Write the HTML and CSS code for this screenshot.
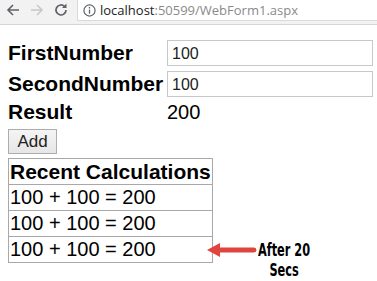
FILE: index.html
```html
<!DOCTYPE html>
<html lang="en">
<head>
    <meta charset="UTF-8">
    <title>WebForm1</title>
    <link rel="stylesheet" href="styles.css">
</head>
<body>
    <div class="toolbar">
        <div class="nav">
            <svg class="nav-icon" width="16" height="16" viewBox="0 0 16 16"><path d="M14 8H3M8 3L3 8l5 5" fill="none" stroke="#5f6368" stroke-width="1.6"/></svg>
            <svg class="nav-icon" width="16" height="16" viewBox="0 0 16 16"><path d="M2 8h11M8 3l5 5-5 5" fill="none" stroke="#c8c8c8" stroke-width="1.6"/></svg>
            <svg class="nav-icon" width="16" height="16" viewBox="0 0 16 16"><path d="M13 8a5 5 0 1 1-1.5-3.6" fill="none" stroke="#5f6368" stroke-width="1.7"/><path d="M13.5 1.5v4.5H9z" fill="#5f6368"/></svg>
        </div>
        <div class="address">
            <svg width="13" height="13" viewBox="0 0 14 14"><circle cx="7" cy="7" r="6" fill="none" stroke="#5f6368" stroke-width="1.3"/><path d="M7 6v4.5" stroke="#5f6368" stroke-width="1.4"/><circle cx="7" cy="4" r="0.9" fill="#5f6368"/></svg>
            <span class="host">localhost</span><span class="path">:50599/WebForm1.aspx</span>
        </div>
    </div>

    <div class="page">
        <div class="form">
            <label class="label">FirstNumber</label>
            <input class="field" type="text" value="100">
            <label class="label">SecondNumber</label>
            <input class="field" type="text" value="100">
            <span class="label">Result</span>
            <span class="result">200</span>
        </div>
        <button class="add-btn">Add</button>

        <table class="recent">
            <tr><th>Recent Calculations</th></tr>
            <tr><td>100 + 100 = 200</td></tr>
            <tr><td>100 + 100 = 200</td></tr>
            <tr><td>100 + 100 = 200</td></tr>
        </table>
    </div>

    <div class="note">
        <svg width="50" height="14" viewBox="0 0 50 14"><path d="M0 7L13 0v4.5h34a2.5 2.5 0 0 1 0 5H13V14z" fill="#e0443e"/></svg>
        <span class="note-text">After 20<br>Secs</span>
    </div>
</body>
</html>
```

FILE: styles.css
```css
* {
    box-sizing: border-box;
}

body {
    margin: 0;
    font-family: 'Liberation Sans', Arial, sans-serif;
    background: white;
    color: black;
}

.toolbar {
    height: 25px;
    background: #f2f2f2;
    border-bottom: 1px solid #d6d6d6;
    display: flex;
}

.nav {
    width: 77px;
    display: flex;
    align-items: center;
    gap: 8px;
    padding: 0 0 4px 5px;
}

.address {
    flex: 1;
    height: 21px;
    background: white;
    border-left: 1px solid #dadada;
    border-bottom: 1px solid #dadada;
    display: flex;
    align-items: center;
    gap: 4px;
    padding-left: 5px;
    font-family: 'Open Sans', sans-serif;
    font-size: 13px;
}

.host {
    color: #222;
}

.path {
    color: #8a8a8a;
    margin-left: -4px;
}

.page {
    padding: 15px 8px 0;
}

.form {
    display: grid;
    grid-template-columns: 153px 206px;
    column-gap: 6px;
    row-gap: 5px;
    align-items: center;
}

.label {
    font-size: 21px;
    font-weight: bold;
    line-height: 20px;
}

.field {
    height: 26px;
    border: 1px solid #c8c8c8;
    padding: 1px 4px 0;
    font-family: inherit;
    font-size: 16px;
    color: #222;
}

.result {
    font-size: 20px;
    line-height: 20px;
}

.add-btn {
    display: block;
    margin-top: 7px;
    width: 49px;
    height: 25px;
    padding: 0;
    border: 1px solid #adadad;
    background: linear-gradient(#f4f4f4, #e6e6e6);
    font-family: inherit;
    font-size: 17px;
    color: #222;
}

.recent {
    margin-top: 4px;
    border-collapse: collapse;
    border: 1px solid #a8a8a8;
}

.recent th,
.recent td {
    border: 1px solid #a8a8a8;
    height: 26px;
    padding: 0 1px;
    text-align: left;
    white-space: nowrap;
}

.recent th {
    font-size: 21px;
}

.recent td {
    font-size: 20px;
}

.note {
    position: absolute;
    left: 207px;
    top: 240px;
    display: flex;
    align-items: flex-start;
}

.note svg {
    margin-top: 3px;
}

.note-text {
    display: inline-block;
    font-family: 'DejaVu Sans Condensed', 'DejaVu Sans', sans-serif;
    font-weight: bold;
    font-size: 18px;
    line-height: 20px;
    text-align: center;
    margin-left: 1px;
    transform: scaleX(0.7);
    transform-origin: left top;
}
```
